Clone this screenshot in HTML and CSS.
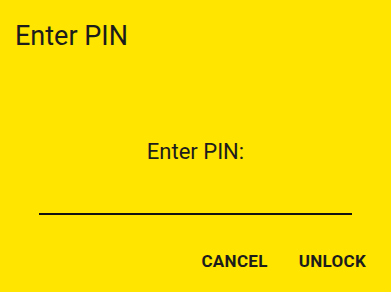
FILE: index.html
```html
<!DOCTYPE html>
<html>
<head>
<meta charset="utf-8">
<link rel="stylesheet" href="styles.css">
</head>
<body>
<div class="screen">
  <h1 class="title">Enter PIN</h1>
  <div class="dialog">
    <div class="label">Enter PIN:</div>
    <div class="field"></div>
    <div class="actions">
      <span class="btn">CANCEL</span>
      <span class="btn">UNLOCK</span>
    </div>
  </div>
</div>
</body>
</html>
```
FILE: styles.css
```css
html, body {
  margin: 0;
  padding: 0;
  background: #FFE500;
}
.screen {
  width: 391px;
  height: 292px;
  display: flex;
  flex-direction: column;
  font-family: Roboto, "Noto Sans", sans-serif;
  color: #1c1c1c;
}
.title {
  margin: 0;
  padding: 21px 0 0 15px;
  font-size: 27px;
  line-height: 31px;
  font-weight: 400;
}
.dialog {
  display: flex;
  flex-direction: column;
  align-items: center;
  padding-top: 87px;
}
.label {
  font-size: 22px;
  line-height: 26px;
}
.field {
  width: 313px;
  height: 2px;
  background: #111;
  margin-top: 48px;
}
.actions {
  align-self: stretch;
  display: flex;
  justify-content: flex-end;
  gap: 31px;
  padding: 36px 25px 0 0;
}
.btn {
  font-size: 17px;
  line-height: 20px;
  font-weight: 700;
  letter-spacing: 0.3px;
}
```
